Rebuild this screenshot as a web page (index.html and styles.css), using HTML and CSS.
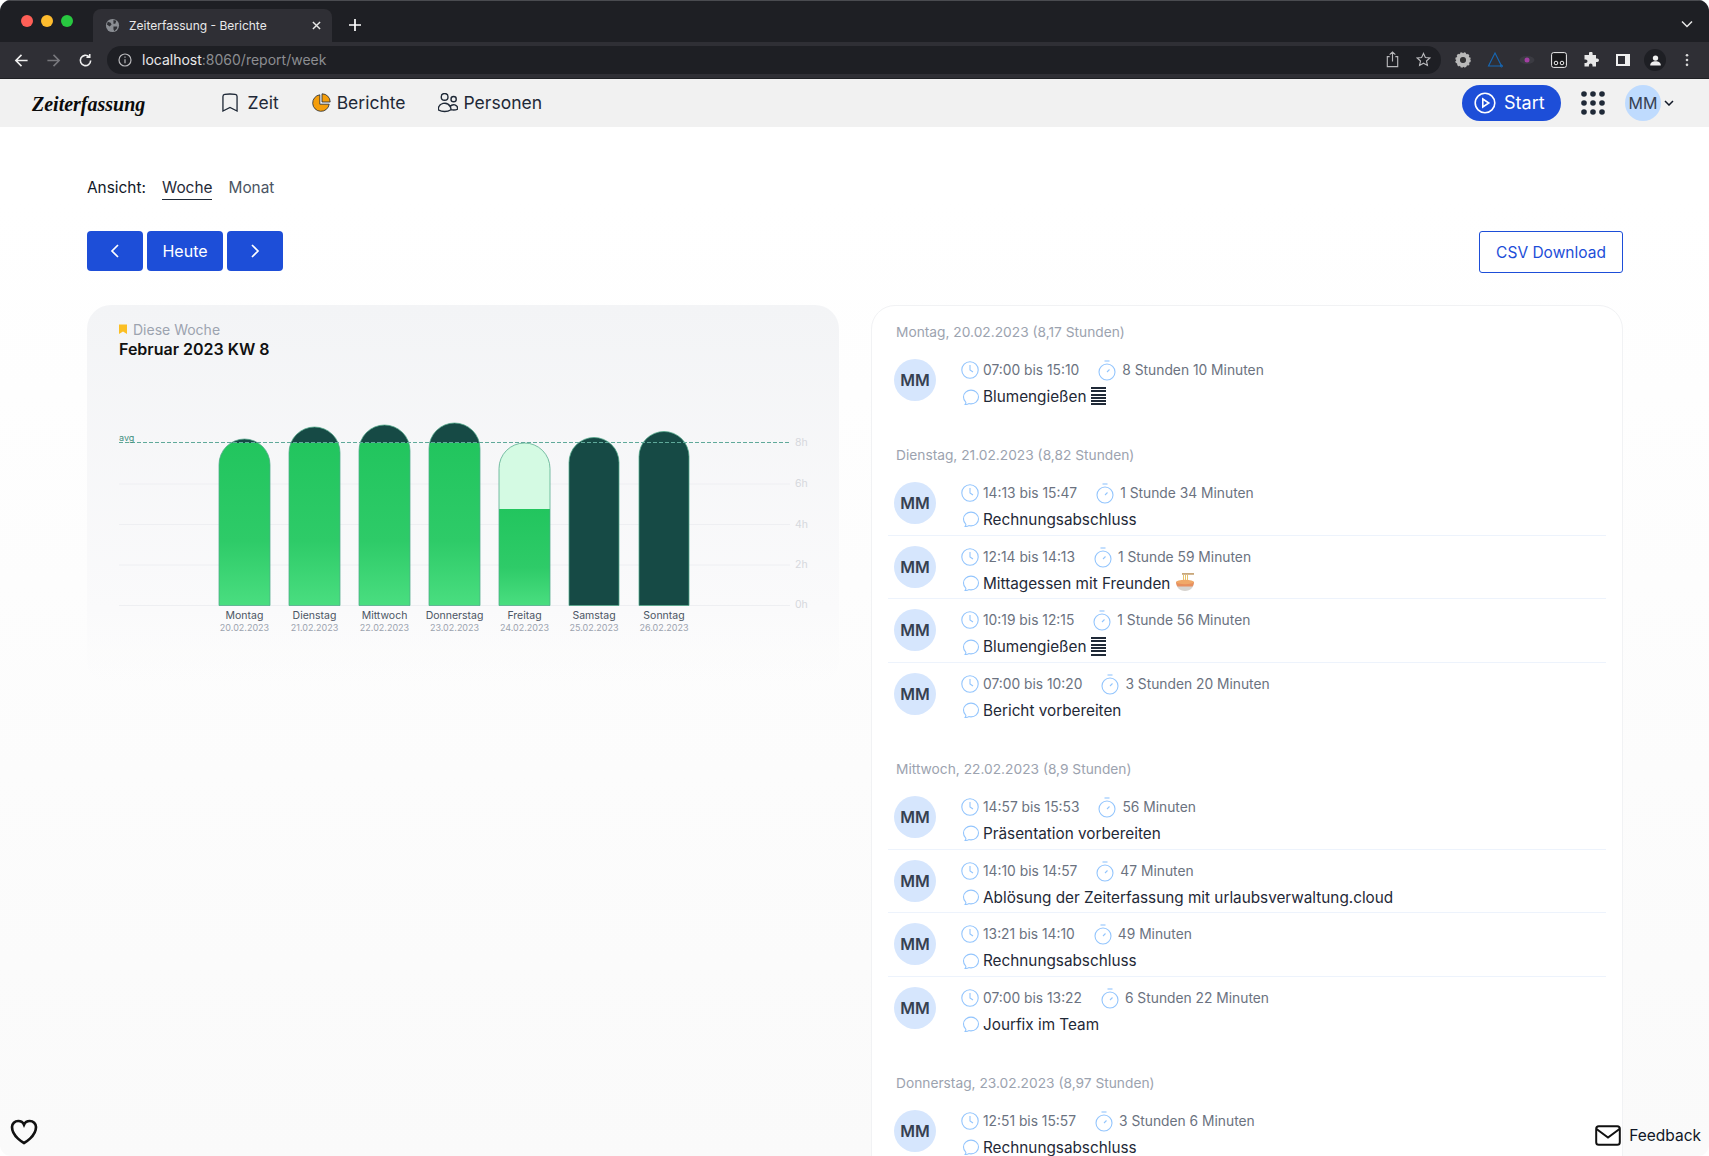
FILE: index.html
```html
<!DOCTYPE html>
<html lang="de">
<head>
<meta charset="utf-8">
<title>Zeiterfassung - Berichte</title>
<link rel="stylesheet" href="styles.css">
</head>
<body>
<svg class="defs" width="0" height="0" aria-hidden="true">
  <symbol id="i-clock" viewBox="0 0 18 18"><circle cx="9" cy="9" r="8.2"/><path d="M9 4v5l3 2"/></symbol>
  <symbol id="i-watch" viewBox="0 0 18 21"><path d="M6.5 1h5"/><circle cx="9" cy="12" r="8"/><path d="M9 12l2.5-2.5"/></symbol>
  <symbol id="i-chat" viewBox="0 0 24 24"><path d="M12 20.25c4.97 0 9-3.694 9-8.25s-4.03-8.25-9-8.25S3 7.444 3 12c0 2.104.859 4.023 2.273 5.48.432.447.74 1.04.586 1.641a4.483 4.483 0 01-.923 1.785A5.969 5.969 0 006 21c1.282 0 2.47-.402 3.445-1.087.81.22 1.668.337 2.555.337z"/></symbol>
</svg>
<div class="window">
  <div class="tabstrip">
    <div class="lights"><span class="light red"></span><span class="light amber"></span><span class="light green"></span></div>
    <div class="tab">
      <svg class="favicon" viewBox="0 0 16 16"><circle cx="8" cy="8" r="7" fill="#8a8d93"/><path d="M3 4l3 1 1 2-2 2-3-2zM9 2l3 1-1 3-2 0zM9 9l4 0 0 2-3 3-1-2z" fill="#303136"/></svg>
      <span class="tab-title">Zeiterfassung - Berichte</span>
      <svg class="tab-close" viewBox="0 0 10 10"><path d="M1 1l8 8M9 1l-8 8"/></svg>
    </div>
    <svg class="tab-new" viewBox="0 0 12 12"><path d="M6 0v12M0 6h12"/></svg>
    <svg class="tab-more" viewBox="0 0 12 8"><path d="M1 1.5l5 5 5-5"/></svg>
  </div>
  <div class="toolbar">
    <svg class="tool-nav" viewBox="0 0 16 16"><path d="M14.5 8H2M8 2L2 8l6 6"/></svg>
    <svg class="tool-nav dim" viewBox="0 0 16 16"><path d="M1.5 8H14M8 2l6 6-6 6"/></svg>
    <svg class="tool-nav" viewBox="0 0 16 16"><path d="M13.5 8a5.5 5.5 0 1 1-1.7-4M12.5 1v3.6H9"/></svg>
    <div class="omnibox">
      <svg class="omni-info" viewBox="0 0 14 14"><circle cx="7" cy="7" r="6"/><path d="M7 6.2v4M7 3.6v1.2"/></svg>
      <span class="url"><span class="url-host">localhost</span>:8060/report/week</span>
      <svg class="omni-icon share" viewBox="0 0 14 18"><path d="M4 6H1.5v10.5h11V6H10M7 11V1M4 3.8L7 1l3 2.8"/></svg>
      <svg class="omni-icon star" viewBox="0 0 16 16"><path d="M8 1.5l2 4.4 4.700.5-3.500 3.200 1 4.700L8 11.900l-4.200 2.400 1-4.700L1.300 6.400 6 5.900z"/></svg>
    </div>
    <div class="exts">
      <svg class="ext" viewBox="0 0 16 16"><circle cx="8" cy="8" r="5" fill="none" stroke="#b9b9b9" stroke-width="4"/><circle cx="8" cy="8" r="6.500" fill="none" stroke="#b9b9b9" stroke-width="2.500" stroke-dasharray="2 1.400"/><circle cx="8" cy="8" r="2.500" fill="#333"/></svg>
      <svg class="ext" viewBox="0 0 16 16"><path d="M8 1L1.500 14h13z" fill="none" stroke="#1768b5" stroke-width="1.100"/><circle cx="14.500" cy="14" r="1" fill="none" stroke="#1768b5"/></svg>
      <svg class="ext" viewBox="0 0 16 16"><ellipse cx="8" cy="8" rx="7.500" ry="4" fill="#3b3b42"/><circle cx="8" cy="8" r="2.500" fill="#a33fa3"/></svg>
      <svg class="ext" viewBox="0 0 16 16"><rect x=".6" y=".6" width="14.800" height="14.800" rx="2" fill="#17171a" stroke="#eee" stroke-width="1"/><circle cx="5" cy="11" r="1.800" fill="none" stroke="#eee"/><circle cx="11" cy="11" r="1.800" fill="none" stroke="#eee"/></svg>
      <svg class="ext" viewBox="0 0 16 16"><path d="M6 1.500a1.800 1.800 0 0 1 3.600 0V3H13v3.400h1.200a1.800 1.800 0 0 1 0 3.600H13v4.500H9.500v-1.200a1.800 1.800 0 0 0-3.600 0v1.200H1.500V11h1.200a1.800 1.800 0 0 0 0-3.600H1.500V3H6z" fill="#e8e8e8"/></svg>
      <svg class="ext" viewBox="0 0 16 16"><rect x="1" y="2" width="14" height="12" fill="#efefef"/><rect x="3" y="4" width="7" height="8" fill="#2f2f35"/></svg>
      <span class="ext-user"><svg viewBox="0 0 16 16"><circle cx="8" cy="5" r="3.300" fill="#efefef"/><path d="M1.500 14c0-3.500 3-5 6.500-5s6.500 1.500 6.500 5z" fill="#efefef"/></svg></span>
      <svg class="ext-menu" viewBox="0 0 4 16"><circle cx="2" cy="2.500" r="1.500"/><circle cx="2" cy="8" r="1.500"/><circle cx="2" cy="13.500" r="1.500"/></svg>
    </div>
  </div>

  <header class="appnav">
    <a class="logo">Zeiterfassung</a>
    <nav class="mainnav">
      <a class="navitem"><svg class="navicon stroke bookmark" viewBox="3.500 2 17 20"><path d="M17.593 3.322c1.100.128 1.907 1.077 1.907 2.185V21L12 17.250 4.500 21V5.507c0-1.108.806-2.057 1.907-2.185a48.507 48.507 0 0 1 11.186 0z"/></svg>Zeit</a>
      <a class="navitem"><svg class="navicon pie" viewBox="0 0 20 20"><path d="M8.800 1.800a8.300 8.300 0 1 0 9.400 9.400H8.800z" fill="#f59e0b" stroke="#1f2937" stroke-width=".8"/><path d="M11 .8a8.200 8.200 0 0 1 8.200 8.200H11z" fill="#f59e0b" stroke="#1f2937" stroke-width=".8"/></svg>Berichte</a>
      <a class="navitem"><svg class="navicon stroke people" viewBox="2 2.500 20 20"><path d="M15 19.128a9.380 9.380 0 0 0 2.625.372 9.337 9.337 0 0 0 4.121-.952 4.125 4.125 0 0 0-7.533-2.493M15 19.128v-.003c0-1.113-.285-2.160-.786-3.070M15 19.128v.106A12.318 12.318 0 0 1 8.624 21c-2.331 0-4.512-.645-6.374-1.766l-.001-.109a6.375 6.375 0 0 1 11.964-3.070M12 6.375a3.375 3.375 0 1 1-6.750 0 3.375 3.375 0 0 1 6.750 0zm8.250 2.250a2.625 2.625 0 1 1-5.250 0 2.625 2.625 0 0 1 5.250 0z"/></svg>Personen</a>
    </nav>
    <div class="navright">
      <a class="startbtn"><svg class="playicon" viewBox="0 0 22 22"><circle cx="11" cy="11" r="9.800"/><path d="M8.800 7l6 4-6 4z"/></svg>Start</a>
      <svg class="gridicon" viewBox="0 0 24 24"><circle cx="3" cy="3" r="2.800"/><circle cx="12" cy="3" r="2.800"/><circle cx="21" cy="3" r="2.800"/><circle cx="3" cy="12" r="2.800"/><circle cx="12" cy="12" r="2.800"/><circle cx="21" cy="12" r="2.800"/><circle cx="3" cy="21" r="2.800"/><circle cx="12" cy="21" r="2.800"/><circle cx="21" cy="21" r="2.800"/></svg>
      <span class="navavatar">MM</span>
      <svg class="chevron" viewBox="0 0 10 6"><path d="M1 1l4 4 4-4"/></svg>
    </div>
  </header>

  <main class="page">
    <div class="viewtabs">
      <span class="viewlabel">Ansicht:</span>
      <a class="viewtab active">Woche</a>
      <a class="viewtab">Monat</a>
    </div>
    <div class="actions">
      <div class="pager">
        <button class="btn btn-icon"><svg viewBox="0 0 10 16"><path d="M8 2L2 8l6 6"/></svg></button>
        <button class="btn btn-today">Heute</button>
        <button class="btn btn-icon"><svg viewBox="0 0 10 16"><path d="M2 2l6 6-6 6"/></svg></button>
      </div>
      <a class="csvbtn">CSV Download</a>
    </div>

    <div class="columns">
      <section class="chartcard">
        <div class="eyebrow"><svg class="eyebrow-icon" viewBox="0 0 8 10"><path d="M0 .5h8V10L4 7.500 0 10z"/></svg>Diese Woche</div>
        <h2 class="charttitle">Februar 2023 KW 8</h2>
        <svg class="chart" viewBox="119 420 690 220" width="690" height="220">
          <defs>
            <linearGradient id="g" x1="0" y1="0" x2="0" y2="1"><stop offset="0" stop-color="#22c55e"/><stop offset=".6" stop-color="#2ecb68"/><stop offset="1" stop-color="#4ade80"/></linearGradient>
            <clipPath id="c1"><path d="M219 605.500V464.500a25.500 25.500 0 0 1 51 0V605.500z"/></clipPath>
            <clipPath id="c2"><path d="M289 605.500V452.500a25.500 25.500 0 0 1 51 0V605.500z"/></clipPath>
            <clipPath id="c3"><path d="M359 605.500V450.500a25.500 25.500 0 0 1 51 0V605.500z"/></clipPath>
            <clipPath id="c4"><path d="M429 605.500V448.500a25.500 25.500 0 0 1 51 0V605.500z"/></clipPath>
            <clipPath id="c5"><path d="M499 605.500V468.500a25.500 25.500 0 0 1 51 0V605.500z"/></clipPath>
          </defs>
          <g class="gridlines">
            <path d="M119 484H790M119 524.500H790M119 565H790M119 605.500H790"/>
          </g>
          <g class="bar" clip-path="url(#c1)"><rect x="219" y="439" width="51" height="4" fill="#164a45"/><rect x="219" y="443" width="51" height="163" fill="url(#g)"/></g>
          <g class="bar" clip-path="url(#c2)"><rect x="289" y="427" width="51" height="16" fill="#164a45"/><rect x="289" y="443" width="51" height="163" fill="url(#g)"/></g>
          <g class="bar" clip-path="url(#c3)"><rect x="359" y="425" width="51" height="18" fill="#164a45"/><rect x="359" y="443" width="51" height="163" fill="url(#g)"/></g>
          <g class="bar" clip-path="url(#c4)"><rect x="429" y="423" width="51" height="20" fill="#164a45"/><rect x="429" y="443" width="51" height="163" fill="url(#g)"/></g>
          <g class="bar" clip-path="url(#c5)"><rect x="499" y="443" width="51" height="66" fill="#d4fae3"/><rect x="499" y="509" width="51" height="97" fill="url(#g)"/></g>
          <g class="barstroke">
            <path d="M219 605.500V464.500a25.500 25.500 0 0 1 51 0V605.500z"/>
            <path d="M289 605.500V452.500a25.500 25.500 0 0 1 51 0V605.500z"/>
            <path d="M359 605.500V450.500a25.500 25.500 0 0 1 51 0V605.500z"/>
            <path d="M429 605.500V448.500a25.500 25.500 0 0 1 51 0V605.500z"/>
            <path d="M499 605.500V468.500a25.500 25.500 0 0 1 51 0V605.500z"/>
          </g>
          <path class="dark" d="M569 605.500V462.500a25 25 0 0 1 50 0V605.500z"/>
          <path class="dark" d="M639 605.500V456.500a25 25 0 0 1 50 0V605.500z"/>
          <path class="avgline" d="M119 442.500H790"/>
          <text class="avgtext" x="119" y="441">avg</text>
          <g class="ylabels">
            <text x="795" y="446">8h</text><text x="795" y="487">6h</text><text x="795" y="527.500">4h</text><text x="795" y="568">2h</text><text x="795" y="608">0h</text>
          </g>
          <g class="daylabels">
            <text x="244.500" y="619">Montag</text><text x="314.500" y="619">Dienstag</text><text x="384.500" y="619">Mittwoch</text><text x="454.500" y="619">Donnerstag</text><text x="524.500" y="619">Freitag</text><text x="594" y="619">Samstag</text><text x="664" y="619">Sonntag</text>
          </g>
          <g class="datelabels">
            <text x="244.500" y="631">20.02.2023</text><text x="314.500" y="631">21.02.2023</text><text x="384.500" y="631">22.02.2023</text><text x="454.500" y="631">23.02.2023</text><text x="524.500" y="631">24.02.2023</text><text x="594" y="631">25.02.2023</text><text x="664" y="631">26.02.2023</text>
          </g>
        </svg>
      </section>

      <section class="listcard">
        <div class="day">
          <h3 class="dayhead">Montag, 20.02.2023 (8,17 Stunden)</h3>
          <div class="row">
            <span class="avatar">MM</span>
            <div class="rowbody">
              <div class="timeline"><svg class="ico clock"><use href="#i-clock"/></svg><span>07:00 bis 15:10</span><svg class="ico watch"><use href="#i-watch"/></svg><span>8 Stunden 10 Minuten</span></div>
              <div class="comment"><svg class="ico chat"><use href="#i-chat"/></svg><span>Blumengießen</span><span class="stack"></span></div>
            </div>
          </div>
        </div>
        <div class="day">
          <h3 class="dayhead">Dienstag, 21.02.2023 (8,82 Stunden)</h3>
          <div class="row">
            <span class="avatar">MM</span>
            <div class="rowbody">
              <div class="timeline"><svg class="ico clock"><use href="#i-clock"/></svg><span>14:13 bis 15:47</span><svg class="ico watch"><use href="#i-watch"/></svg><span>1 Stunde 34 Minuten</span></div>
              <div class="comment"><svg class="ico chat"><use href="#i-chat"/></svg><span>Rechnungsabschluss</span></div>
            </div>
          </div>
          <div class="row">
            <span class="avatar">MM</span>
            <div class="rowbody">
              <div class="timeline"><svg class="ico clock"><use href="#i-clock"/></svg><span>12:14 bis 14:13</span><svg class="ico watch"><use href="#i-watch"/></svg><span>1 Stunde 59 Minuten</span></div>
              <div class="comment"><svg class="ico chat"><use href="#i-chat"/></svg><span>Mittagessen mit Freunden</span>
                <svg class="noodle" viewBox="0 0 20 20"><path d="M7 1h12v1.800H7z" fill="#c9a77a"/><path d="M8.500 3v7M10.500 3v7M12.500 3v7" stroke="#e6c36c" stroke-width="1" fill="none"/><path d="M1 10h18c0 5-3.500 9-9 9S1 15 1 10z" fill="#d6d3cf"/><path d="M1 10h18c-.2 2-.8 3.500-1.500 4.500h-15C1.800 13.500 1.200 12 1 10z" fill="#e88f5e"/><ellipse cx="10" cy="10" rx="9" ry="2.200" fill="#f0a868"/></svg>
              </div>
            </div>
          </div>
          <div class="row">
            <span class="avatar">MM</span>
            <div class="rowbody">
              <div class="timeline"><svg class="ico clock"><use href="#i-clock"/></svg><span>10:19 bis 12:15</span><svg class="ico watch"><use href="#i-watch"/></svg><span>1 Stunde 56 Minuten</span></div>
              <div class="comment"><svg class="ico chat"><use href="#i-chat"/></svg><span>Blumengießen</span><span class="stack"></span></div>
            </div>
          </div>
          <div class="row">
            <span class="avatar">MM</span>
            <div class="rowbody">
              <div class="timeline"><svg class="ico clock"><use href="#i-clock"/></svg><span>07:00 bis 10:20</span><svg class="ico watch"><use href="#i-watch"/></svg><span>3 Stunden 20 Minuten</span></div>
              <div class="comment"><svg class="ico chat"><use href="#i-chat"/></svg><span>Bericht vorbereiten</span></div>
            </div>
          </div>
        </div>
        <div class="day">
          <h3 class="dayhead">Mittwoch, 22.02.2023 (8,9 Stunden)</h3>
          <div class="row">
            <span class="avatar">MM</span>
            <div class="rowbody">
              <div class="timeline"><svg class="ico clock"><use href="#i-clock"/></svg><span>14:57 bis 15:53</span><svg class="ico watch"><use href="#i-watch"/></svg><span>56 Minuten</span></div>
              <div class="comment"><svg class="ico chat"><use href="#i-chat"/></svg><span>Präsentation vorbereiten</span></div>
            </div>
          </div>
          <div class="row">
            <span class="avatar">MM</span>
            <div class="rowbody">
              <div class="timeline"><svg class="ico clock"><use href="#i-clock"/></svg><span>14:10 bis 14:57</span><svg class="ico watch"><use href="#i-watch"/></svg><span>47 Minuten</span></div>
              <div class="comment"><svg class="ico chat"><use href="#i-chat"/></svg><span>Ablösung der Zeiterfassung mit urlaubsverwaltung.cloud</span></div>
            </div>
          </div>
          <div class="row">
            <span class="avatar">MM</span>
            <div class="rowbody">
              <div class="timeline"><svg class="ico clock"><use href="#i-clock"/></svg><span>13:21 bis 14:10</span><svg class="ico watch"><use href="#i-watch"/></svg><span>49 Minuten</span></div>
              <div class="comment"><svg class="ico chat"><use href="#i-chat"/></svg><span>Rechnungsabschluss</span></div>
            </div>
          </div>
          <div class="row">
            <span class="avatar">MM</span>
            <div class="rowbody">
              <div class="timeline"><svg class="ico clock"><use href="#i-clock"/></svg><span>07:00 bis 13:22</span><svg class="ico watch"><use href="#i-watch"/></svg><span>6 Stunden 22 Minuten</span></div>
              <div class="comment"><svg class="ico chat"><use href="#i-chat"/></svg><span>Jourfix im Team</span></div>
            </div>
          </div>
        </div>
        <div class="day">
          <h3 class="dayhead">Donnerstag, 23.02.2023 (8,97 Stunden)</h3>
          <div class="row">
            <span class="avatar">MM</span>
            <div class="rowbody">
              <div class="timeline"><svg class="ico clock"><use href="#i-clock"/></svg><span>12:51 bis 15:57</span><svg class="ico watch"><use href="#i-watch"/></svg><span>3 Stunden 6 Minuten</span></div>
              <div class="comment"><svg class="ico chat"><use href="#i-chat"/></svg><span>Rechnungsabschluss</span></div>
            </div>
          </div>
        </div>
      </section>
    </div>
  </main>

  <svg class="heart" viewBox="0 0 24 24"><path d="M21 8.250c0-2.485-2.099-4.500-4.688-4.500-1.935 0-3.597 1.126-4.312 2.733-.715-1.607-2.377-2.733-4.313-2.733C5.100 3.750 3 5.765 3 8.250c0 7.220 9 12 9 12s9-4.780 9-12z"/></svg>
  <a class="feedback"><svg class="mail" viewBox="0 0 26 21"><rect x="1.200" y="1.200" width="23.600" height="18.600" rx="2.500"/><path d="M1.500 4L13 12.500 24.500 4"/></svg>Feedback</a>
</div>
</body>
</html>
```
FILE: styles.css
```css
* { box-sizing: border-box; }
html, body { margin: 0; padding: 0; background: #fff; }
body { font-family: Inter, "Liberation Sans", sans-serif; color: #111827; }
.defs { position: absolute; }
.window {
  position: relative;
  width: 1709px;
  height: 1156px;
  overflow: hidden;
  border-radius: 11px;
  background: linear-gradient(#fff 0, #fff 200px, #fafafa 100%);
}

/* browser chrome */
.tabstrip {
  position: relative;
  height: 42px;
  display: flex;
  align-items: flex-end;
  background: #1e1f24;
  border-top: 1px solid #4a4b50;
}
.lights { display: flex; gap: 8px; margin: 0 0 15px 21px; width: 72px; }
.light { width: 12px; height: 12px; border-radius: 50%; }
.red { background: #ff5f57; }
.amber { background: #febc2e; }
.green { background: #28c840; }
.tab {
  width: 239px;
  height: 33px;
  display: flex;
  align-items: center;
  padding: 0 0 0 12px;
  background: #2f2f35;
  border-radius: 8px 8px 0 0;
}
.favicon { width: 15px; height: 15px; margin-right: 9px; }
.tab-title { font-size: 12px; color: #e9e9ea; width: 183px; white-space: nowrap; }
.tab-close { width: 9px; height: 9px; stroke: #e8e8e8; stroke-width: 1.600; fill: none; }
.tab-new { width: 12px; height: 12px; margin: 0 0 11px 17px; stroke: #fff; stroke-width: 1.700; fill: none; }
.tab-more { width: 12px; height: 8px; margin: 0 16px 14px auto; stroke: #e8e8e8; stroke-width: 1.500; fill: none; }
.toolbar {
  height: 37px;
  display: flex;
  align-items: center;
  background: #2f2f35;
  border-bottom: 1px solid #1f2024;
  padding-left: 14px;
}
.tool-nav { width: 15px; height: 15px; margin-right: 17px; stroke: #efefef; stroke-width: 1.700; fill: none; flex: none; }
.tool-nav.dim { stroke: #77777c; }
.tool-nav:nth-child(3) { margin-right: 14px; }
.omnibox {
  width: 1334px;
  height: 28px;
  margin-top: -1px;
  display: flex;
  align-items: center;
  padding-left: 11px;
  border-radius: 14px;
  background: #1e1f24;
}
.omni-info { width: 14px; height: 14px; margin-right: 10px; stroke: #b8b8bb; stroke-width: 1.200; fill: none; }
.url { font-size: 14px; color: #8c8d91; flex: 1; }
.url-host { color: #e9e9ea; }
.omni-icon { width: 15px; height: 15px; margin-right: 16px; stroke: #b8b8bb; stroke-width: 1.200; fill: none; }
.omni-icon.star { margin-right: 10px; }
.omni-icon.share { height: 17px; }
.exts { display: flex; align-items: center; margin-left: 14px; }
.ext { width: 16px; height: 16px; margin-right: 16px; flex: none; }
.ext-user { width: 22px; height: 22px; border-radius: 50%; background: #1e1f24; display: flex; align-items: center; justify-content: center; margin: 0 19px 0 -3px; }
.ext-user svg { width: 13px; height: 13px; }
.ext-menu { width: 4px; height: 14px; fill: #d8d8d8; }

/* app nav */
.appnav {
  height: 48px;
  display: flex;
  align-items: center;
  padding: 0 35px 1px 32px;
  background: #f1f1f1;
}
.logo {
  width: 190px;
  font-family: "Liberation Serif", serif;
  font-style: italic;
  font-weight: 700;
  font-size: 20px;
  color: #0b0b0b;
  padding-top: 3px;
}
.mainnav { display: flex; gap: 32px; }
.navitem { display: flex; align-items: center; font-size: 17.500px; color: #1f2937; }
.navicon { flex: none; }
.navicon.stroke { fill: none; stroke: #1f2937; stroke-width: 1.400; }
.bookmark { width: 16px; height: 19px; margin-right: 9.500px; }
.pie { width: 20px; height: 20px; margin-right: 6px; }
.people { width: 20px; height: 20px; margin-right: 6px; }
.navright { margin-left: auto; display: flex; align-items: center; }
.startbtn {
  width: 99px;
  height: 36px;
  display: flex;
  align-items: center;
  gap: 8px;
  padding-left: 12px;
  border-radius: 18px;
  background: #1d4ed8;
  color: #fff;
  font-size: 18px;
}
.playicon { width: 22px; height: 22px; fill: none; stroke: #fff; stroke-width: 1.600; }
.gridicon { width: 24px; height: 24px; margin-left: 20px; fill: #1f2937; }
.navavatar {
  width: 36px;
  height: 36px;
  margin-left: 20px;
  border-radius: 50%;
  background: #bfdbfe;
  display: flex;
  align-items: center;
  justify-content: center;
  font-size: 16px;
  color: #374151;
}
.chevron { width: 10px; height: 6px; margin-left: 3px; fill: none; stroke: #111827; stroke-width: 1.500; }

/* page */
.page { padding: 0 86px 0 87px; }
.viewtabs { display: flex; align-items: center; height: 24px; margin-top: 49px; font-size: 15.400px; }
.viewlabel { width: 75px; color: #111827; padding-bottom: 1px; }
.viewtab { margin-right: 16px; color: #4b5563; padding-bottom: 1px; }
.viewtab.active { color: #1f2937; border-bottom: 1px solid #1f2937; height: 23px; line-height: 22px; }
.actions { display: flex; justify-content: space-between; align-items: flex-start; margin-top: 31px; }
.pager { display: flex; gap: 4px; }
.btn {
  height: 40px;
  border: 0;
  border-radius: 4px;
  background: #1d4ed8;
  color: #fff;
  font: 16px Inter, sans-serif;
  display: flex;
  align-items: center;
  justify-content: center;
  padding: 0;
}
.btn-icon { width: 56px; }
.btn-icon svg { width: 10px; height: 16px; fill: none; stroke: #fff; stroke-width: 1.700; }
.btn-today { width: 76px; }
.csvbtn {
  width: 144px;
  height: 42px;
  display: flex;
  align-items: center;
  justify-content: center;
  border: 1px solid #1d4ed8;
  border-radius: 3px;
  background: #fff;
  color: #1d4ed8;
  font-size: 15.500px;
}
.columns { display: grid; grid-template-columns: 752px 752px; gap: 32px; margin-top: 32px; }

.chartcard {
  align-self: start;
  height: 380px;
  padding: 14px 0 0 32px;
  border-radius: 24px;
  background: linear-gradient(#f3f4f6, #fafafb 80%, rgba(255,255,255,0));
}
.eyebrow { display: flex; align-items: center; height: 20px; font-size: 14px; color: #9ca3af; }
.eyebrow-icon { width: 8px; height: 10px; margin-right: 6px; fill: #fbbf24; }
.charttitle { margin: 0; font-size: 16px; line-height: 20px; font-weight: 600; color: #111; }
.chart { display: block; margin-top: 61px; overflow: visible; }
.gridlines path { stroke: #eeeff2; stroke-width: 1; fill: none; }
.barstroke path { fill: none; stroke: #4fa888; stroke-opacity: .75; stroke-width: 1; }
.dark { fill: #164a45; stroke: #4fa888; stroke-opacity: .75; stroke-width: 1; }
.avgline { stroke: #5fa99a; stroke-width: 1; stroke-dasharray: 4 2; fill: none; }
.avgtext { font-size: 9px; fill: #3f8f7f; }
.ylabels text { font-size: 10.500px; fill: #d6d8dd; }
.daylabels text { font-size: 10.500px; fill: #4b5563; text-anchor: middle; }
.datelabels text { font-size: 9px; fill: #9ca3af; text-anchor: middle; }

.listcard {
  min-height: 900px;
  padding: 16px 16px 0;
  border: 1px solid #f1f2f4;
  border-radius: 24px;
  background: #fff;
}
.day { margin-bottom: 32.330px; }
.dayhead { margin: 0 0 7px 8px; font-size: 13.750px; line-height: 20px; font-weight: 400; color: #9ca3af; }
.row {
  display: flex;
  height: 63.670px;
  padding: 10px 0 0 6px;
  border-bottom: 1px solid #edf3fc;
}
.row:last-child { border-bottom-color: transparent; }
.avatar {
  flex: none;
  width: 42px;
  height: 42px;
  border-radius: 50%;
  background: #d6e6fd;
  display: flex;
  align-items: center;
  justify-content: center;
  font-size: 16px;
  font-weight: 600;
  color: #374151;
}
.rowbody { margin-left: 25px; padding-top: 1px; }
.timeline { display: flex; align-items: center; height: 20px; font-size: 13.800px; color: #6b7280; }
.ico { flex: none; fill: none; stroke: #93c5fd; }
.clock { width: 18px; height: 18px; margin-right: 4px; stroke-width: 1.100; }
.watch { width: 18px; height: 21px; margin: 1px 6px 0 19px; stroke-width: 1.100; }
.comment { display: flex; align-items: center; height: 24px; margin-top: 4.500px; font-size: 15.300px; color: #1f2937; }
.chat { width: 20px; height: 20px; margin-right: 2px; stroke-width: 1.300; }
.stack {
  width: 15px;
  height: 20px;
  margin-left: 4px;
  background: repeating-linear-gradient(#1f2937 0, #1f2937 2px, #fff 2px, #fff 3.300px);
}
.noodle { width: 20px; height: 20px; margin-left: 5px; margin-top: -3px; }

/* fixed corners */
.heart { position: absolute; left: 8px; bottom: 8px; width: 32px; height: 32px; fill: none; stroke: #111; stroke-width: 2; }
.feedback { position: absolute; right: 8px; bottom: 10px; display: flex; align-items: center; gap: 8px; font-size: 15.500px; color: #111827; }
.mail { width: 26px; height: 21px; fill: none; stroke: #111; stroke-width: 2; }
```
